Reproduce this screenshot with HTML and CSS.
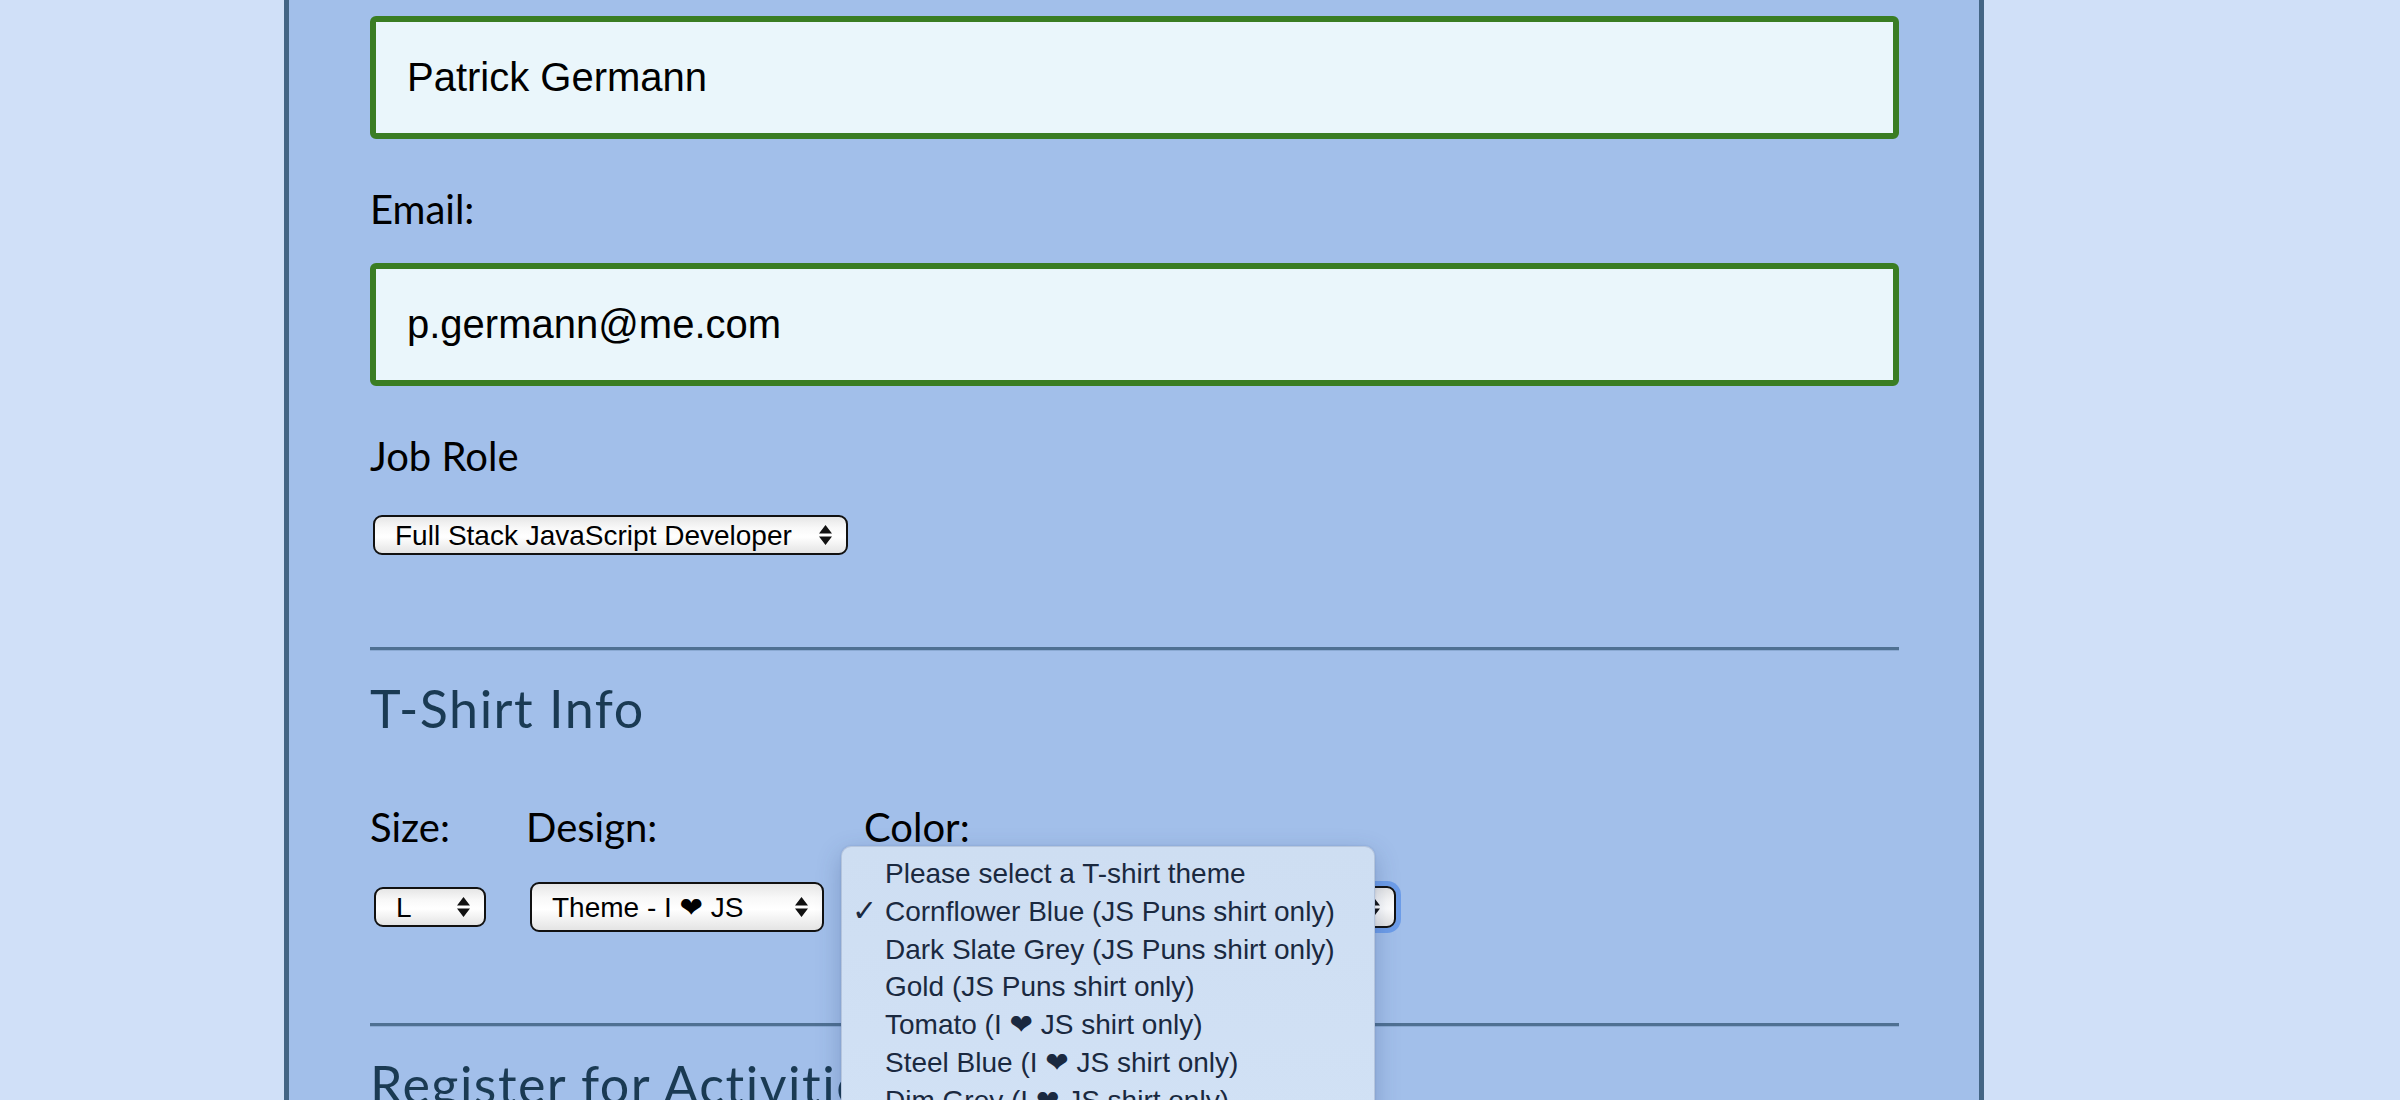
FILE: index.html
```html
<!DOCTYPE html>
<html lang="en">
<head>
<meta charset="utf-8">
<title>Conference Registration</title>
<link rel="stylesheet" href="styles.css">
</head>
<body>
<main class="card">
  <form class="form">
    <input class="text-input" type="text" value="Patrick Germann">
    <label class="label label-gap">Email:</label>
    <input class="text-input input-gap" type="email" value="p.germann@me.com">
    <label class="label label-gap">Job Role</label>
    <div class="job-field">
      <span class="select-wrap">
        <select class="select select-job"><option>Full Stack JavaScript Developer</option></select>
        <svg class="arrows" width="13" height="20" viewBox="0 0 13 20"><path d="M0 8.5 L6.5 0 L13 8.5 Z M0 11.5 L13 11.5 L6.5 20 Z"/></svg>
      </span>
    </div>
    <div class="rule rule-first"></div>
    <h2 class="section-title">T-Shirt Info</h2>
    <div class="shirt-row">
      <div class="shirt-col">
        <label class="label">Size:</label>
        <div class="select-slot">
          <span class="select-wrap">
            <select class="select select-size"><option>L</option></select>
            <svg class="arrows" width="13" height="20" viewBox="0 0 13 20"><path d="M0 8.5 L6.5 0 L13 8.5 Z M0 11.5 L13 11.5 L6.5 20 Z"/></svg>
          </span>
        </div>
      </div>
      <div class="shirt-col">
        <label class="label">Design:</label>
        <div class="select-slot">
          <span class="select-wrap">
            <select class="select select-design"><option>Theme - I &#10084;&#xFE0E; JS</option></select>
            <svg class="arrows" width="13" height="20" viewBox="0 0 13 20"><path d="M0 8.5 L6.5 0 L13 8.5 Z M0 11.5 L13 11.5 L6.5 20 Z"/></svg>
          </span>
        </div>
      </div>
      <div class="shirt-col">
        <label class="label">Color:</label>
        <div class="select-slot">
          <span class="select-wrap focused">
            <select class="select select-color"><option>Cornflower Blue (JS Puns shirt only)</option></select>
            <svg class="arrows" width="13" height="20" viewBox="0 0 13 20"><path d="M0 8.5 L6.5 0 L13 8.5 Z M0 11.5 L13 11.5 L6.5 20 Z"/></svg>
          </span>
          <ul class="menu">
            <li class="menu-item">Please select a T-shirt theme</li>
            <li class="menu-item"><span class="check">&#10003;</span>Cornflower Blue (JS Puns shirt only)</li>
            <li class="menu-item">Dark Slate Grey (JS Puns shirt only)</li>
            <li class="menu-item">Gold (JS Puns shirt only)</li>
            <li class="menu-item">Tomato (I <span class="heart">&#10084;&#xFE0E;</span> JS shirt only)</li>
            <li class="menu-item">Steel Blue (I <span class="heart">&#10084;&#xFE0E;</span> JS shirt only)</li>
            <li class="menu-item">Dim Grey (I <span class="heart">&#10084;&#xFE0E;</span> JS shirt only)</li>
          </ul>
        </div>
      </div>
    </div>
    <div class="rule rule-second"></div>
    <h2 class="section-title">Register for Activities</h2>
  </form>
</main>
</body>
</html>
```
FILE: styles.css
```css
html, body {
  margin: 0;
  padding: 0;
  height: 1100px;
  overflow: hidden;
}

body {
  background: #d0e0f8;
  font-family: "Lato", "Open Sans", sans-serif;
  color: #000;
}

.card {
  box-sizing: border-box;
  width: 1700px;
  min-height: 1100px;
  margin-left: 284px;
  background: #a2bfea;
  border-left: 5px solid #436585;
  border-right: 5px solid #436585;
  padding: 16px 80px 0 81px;
}

.form {
  display: flex;
  flex-direction: column;
  margin: 0;
}

.text-input {
  box-sizing: border-box;
  display: block;
  width: 100%;
  height: 123px;
  margin: 0;
  padding: 0 31px;
  border: 6px solid #3a7d23;
  border-radius: 6px;
  background: #eaf6fb;
  font-family: "Liberation Sans", Arial, sans-serif;
  font-size: 40px;
  color: #000;
  outline: none;
}

.input-gap {
  margin-top: 31px;
}

.label {
  display: block;
  font-family: "Lato", sans-serif;
  font-size: 40px;
  line-height: 46px;
  color: #000;
}

.label-gap {
  margin-top: 47px;
}

.job-field {
  display: flex;
  margin-top: 36px;
}

.select-wrap {
  position: relative;
  display: flex;
  align-items: center;
  margin-left: 3px;
  border-radius: 9px;
}

.select {
  -webkit-appearance: none;
  appearance: none;
  box-sizing: border-box;
  margin: 0;
  padding: 0 40px 0 20px;
  border: 2px solid #111;
  border-radius: 9px;
  background: linear-gradient(#e6e6e6 0%, #f8f8f8 30%, #ffffff 55%, #e4e4e4 100%);
  font-family: "Liberation Sans", Arial, "DejaVu Sans", sans-serif;
  font-size: 28px;
  color: #000;
  outline: none;
}

.select-job {
  width: 475px;
  height: 40px;
}

.select-size {
  width: 112px;
  height: 40px;
}

.select-design {
  width: 294px;
  height: 50px;
}

.select-color {
  width: 528px;
  height: 42px;
}

.focused {
  box-shadow: 0 0 0 5px #6d9de9;
}

.arrows {
  position: absolute;
  right: 16px;
  top: 50%;
  transform: translateY(-50%);
  fill: #111;
  pointer-events: none;
}

.rule {
  height: 4px;
  background: #4f7092;
  border-bottom: 1px solid #8aa9d2;
  box-sizing: border-box;
}

.rule-first {
  margin-top: 92px;
}

.rule-second {
  margin-top: 91px;
}

.section-title {
  margin: 27px 0 0;
  font-family: "Lato", sans-serif;
  font-weight: 400;
  font-size: 52px;
  line-height: 60px;
  letter-spacing: 1.5px;
  color: #1a3a53;
}

.shirt-row {
  display: flex;
  gap: 40px;
  margin-top: 66px;
}

.shirt-col {
  display: flex;
  flex-direction: column;
}

.select-slot {
  position: relative;
  display: flex;
  align-items: center;
  height: 50px;
  margin-top: 32px;
}

.select-slot .select-wrap {
  margin-left: 4px;
}

.menu {
  position: absolute;
  left: -23px;
  top: -36px;
  width: 534px;
  box-sizing: border-box;
  margin: 0;
  padding: 8px 0 10px;
  list-style: none;
  background: linear-gradient(#cedef2, #d1e1f5);
  border: 1px solid rgba(60, 80, 120, 0.18);
  border-radius: 10px;
  box-shadow: 0 8px 24px rgba(40, 60, 110, 0.28), 0 0 2px rgba(40, 60, 110, 0.2);
  z-index: 5;
}

.menu-item {
  position: relative;
  padding-left: 43px;
  font-family: "Liberation Sans", Arial, "DejaVu Sans", sans-serif;
  font-size: 28px;
  line-height: 37.8px;
  color: #1a2940;
  white-space: nowrap;
}

.heart {
  font-family: "DejaVu Sans", sans-serif;
}

.check {
  position: absolute;
  left: 10px;
  top: -1px;
  font-family: "DejaVu Sans", sans-serif;
  font-size: 30px;
  color: #1a2940;
}
```
